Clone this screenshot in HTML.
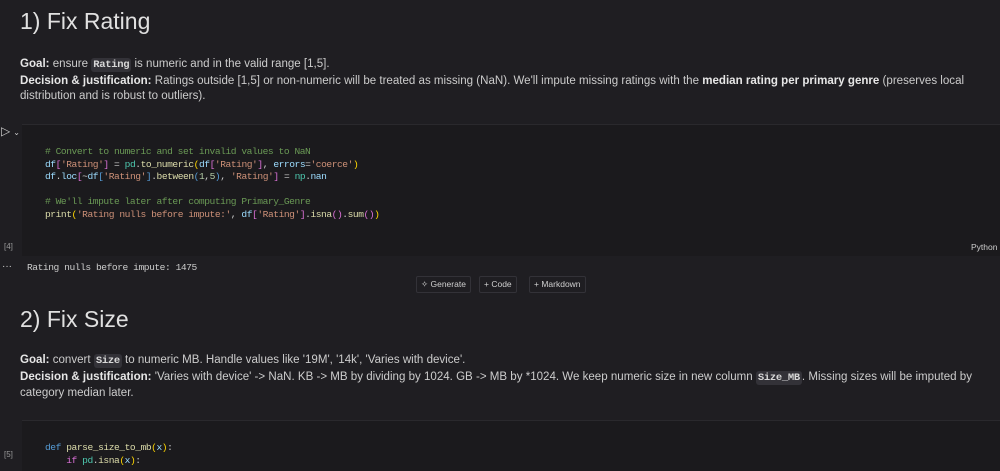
<!DOCTYPE html>
<html><head><meta charset="utf-8"><style>
body{margin:0;width:1000px;height:462px;overflow:hidden;background:#1f1e22;color:#cccccc;font-family:"Liberation Sans",sans-serif;position:relative}
.a{position:absolute;white-space:nowrap}
h1{position:absolute;margin:0;font-weight:400;font-size:23px;color:#e0e0e0;left:20px}
.p{position:absolute;left:20px;font-size:11.55px;line-height:15.5px;color:#cccccc;width:965px}
b{color:#e6e6e6}
code{font-family:"Liberation Mono",monospace;background:#333238;padding:1px 2px;border-radius:3px;font-size:10.5px;letter-spacing:-0.3px;color:#d8d8d8;font-weight:bold}
.cell{position:absolute;left:22px;right:0;background:#1b1a1d;border-top:1px solid #2a292d}
.code{position:absolute;left:45px;font-family:"Liberation Mono",monospace;font-size:9.6px;letter-spacing:-0.45px;line-height:12.6px;white-space:pre;color:#cccccc}
.c{color:#6a9955}.s{color:#ce9178}.v{color:#9cdcfe}.f{color:#dcdcaa}.y{color:#ffd700}.m{color:#da70d6}.t{color:#4ec9b0}.k{color:#569cd6}.n{color:#b5cea8}
.btn{position:absolute;top:276px;height:15px;border:1px solid #333238;font-size:8.5px;color:#cfcfcf;line-height:15px;padding:0 4px;border-radius:2px}
</style></head><body>
<h1 style="top:8px">1) Fix Rating</h1>
<div class="p" style="top:57px"><b>Goal:</b> ensure <code>Rating</code> is numeric and in the valid range [1,5].<br><b>Decision &amp; justification:</b> Ratings outside [1,5] or non-numeric will be treated as missing (NaN). We'll impute missing ratings with the <b>median rating per primary genre</b> (preserves local distribution and is robust to outliers).</div>

<div class="a" style="left:1px;top:124px;font-size:12px;color:#ccc">▷<span style="font-size:8px;margin-left:3px">⌄</span></div>
<div class="cell" style="top:124px;height:131px"></div>
<div class="code" style="top:146px"><span class="c"># Convert to numeric and set invalid values to NaN</span>
<span class="v">df</span><span class="m">[</span><span class="s">'Rating'</span><span class="m">]</span> = <span class="t">pd</span>.<span class="f">to_numeric</span><span class="y">(</span><span class="v">df</span><span class="m">[</span><span class="s">'Rating'</span><span class="m">]</span>, <span class="v">errors</span>=<span class="s">'coerce'</span><span class="y">)</span>
<span class="v">df</span>.<span class="v">loc</span><span class="m">[</span>~<span class="v">df</span><span class="k">[</span><span class="s">'Rating'</span><span class="k">]</span>.<span class="f">between</span><span class="k">(</span><span class="n">1</span>,<span class="n">5</span><span class="k">)</span>, <span class="s">'Rating'</span><span class="m">]</span> = <span class="t">np</span>.<span class="v">nan</span>

<span class="c"># We'll impute later after computing Primary_Genre</span>
<span class="f">print</span><span class="y">(</span><span class="s">'Rating nulls before impute:'</span>, <span class="v">df</span><span class="m">[</span><span class="s">'Rating'</span><span class="m">]</span>.<span class="f">isna</span><span class="m">()</span>.<span class="f">sum</span><span class="m">()</span><span class="y">)</span></div>
<div class="a" style="left:4px;top:242px;font-size:8px;color:#999">[4]</div>
<div class="a" style="left:971px;top:242px;font-size:8.5px;color:#ccc">Python</div>
<div class="a" style="left:2px;top:261px;font-size:10px;color:#ccc">···</div>
<div class="a" style="left:27px;top:262px;font-family:'Liberation Mono',monospace;font-size:9.6px;letter-spacing:-0.45px;color:#cccccc">Rating nulls before impute: 1475</div>
<div class="btn" style="left:416px">✧ Generate</div>
<div class="btn" style="left:479px">+ Code</div>
<div class="btn" style="left:529px">+ Markdown</div>

<h1 style="top:306px">2) Fix Size</h1>
<div class="p" style="top:353px"><b>Goal:</b> convert <code>Size</code> to numeric MB. Handle values like '19M', '14k', 'Varies with device'.<br><b>Decision &amp; justification:</b> 'Varies with device' -&gt; NaN. KB -&gt; MB by dividing by 1024. GB -&gt; MB by *1024. We keep numeric size in new column <code>Size_MB</code>. Missing sizes will be imputed by category median later.</div>

<div class="cell" style="top:420px;height:50px"></div>
<div class="a" style="left:4px;top:450px;font-size:8px;color:#999">[5]</div>
<div class="code" style="top:442px"><span class="k">def</span> <span class="f">parse_size_to_mb</span><span class="y">(</span><span class="v">x</span><span class="y">)</span>:
    <span class="m">if</span> <span class="t">pd</span>.<span class="f">isna</span><span class="y">(</span><span class="v">x</span><span class="y">)</span>:</div>
</body></html>
